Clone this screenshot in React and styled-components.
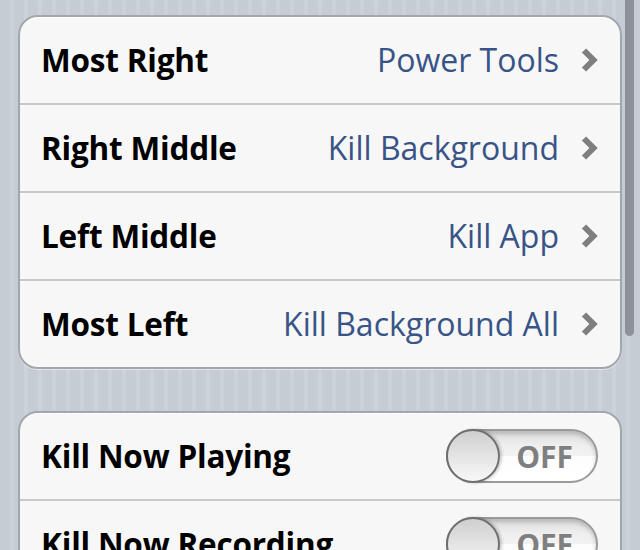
import React from "react"
import styled, { createGlobalStyle } from "styled-components"

const Global = createGlobalStyle`
  html, body {
    margin: 0;
    padding: 0;
  }
  body {
    width: 640px;
    height: 550px;
    overflow: hidden;
    background-color: #c5ccd4;
    background-image: repeating-linear-gradient(
      to right,
      #c5ccd4 0px,
      #c5ccd4 10px,
      #cbd2d9 10px,
      #cbd2d9 14px
    );
    font-family: "Open Sans", "Liberation Sans", sans-serif;
  }
`

const Page = styled.div`
  position: relative;
  padding: 15px 18px 0 18px;
  display: flex;
  flex-direction: column;
  gap: 42px;
`

const Group = styled.section`
  background: #f7f7f7;
  border: 2px solid #a2a7ad;
  border-radius: 20px;
  box-shadow: inset 0 1px 0 #ffffff, 0 1px 0 rgba(255, 255, 255, 0.5);
  overflow: hidden;
`

const Row = styled.div`
  height: 86px;
  display: flex;
  align-items: center;
  padding: 0 22px 0 21px;
  border-bottom: 2px solid #c9c9c9;

  &:last-child {
    border-bottom: none;
  }
`

const Label = styled.span`
  flex: 1;
  font-size: 31.5px;
  font-weight: 700;
  color: #000;
  letter-spacing: -0.2px;
  margin-top: -1px;
`

const Value = styled.span`
  font-size: 32px;
  font-weight: 400;
  color: #385487;
  margin-right: 22px;
  margin-top: -1px;
`

const Chevron = () => (
  <svg width="17" height="24" viewBox="0 0 17 24">
    <path d="M3 2.5 L12.5 12 L3 21.5" fill="none" stroke="#7f7f7f" strokeWidth="6" strokeLinejoin="miter" />
  </svg>
)

const Switch = styled.div`
  position: relative;
  width: 152px;
  height: 54px;
  box-sizing: border-box;
  border-radius: 27px;
  border: 2px solid #9a9a9a;
  background: linear-gradient(to bottom, #dcdcdc 0%, #efefef 30%, #f2f2f2 50%, #fdfdfd 51%, #ffffff 100%);
  box-shadow: inset 0 3px 4px rgba(0, 0, 0, 0.18);
  display: flex;
  align-items: center;
  justify-content: flex-end;
  padding-right: 23px;
`

const Knob = styled.div`
  position: absolute;
  left: -2px;
  top: -2px;
  width: 54px;
  height: 54px;
  box-sizing: border-box;
  border-radius: 50%;
  border: 2px solid #6f6f6f;
  background: linear-gradient(to bottom, #cfcfcf 0%, #e6e6e6 55%, #f8f8f8 100%);
  box-shadow: 2px 0 3px rgba(0, 0, 0, 0.2);
`

const SwitchText = styled.span`
  font-size: 30px;
  font-weight: 700;
  color: #7f7f7f;
  text-shadow: 0 1px 0 #fff;
`

const ScrollBar = styled.div`
  position: absolute;
  left: 625px;
  top: 0;
  width: 9px;
  height: 336px;
  border-radius: 0 0 5px 5px;
  background: #8d9298;
`

const Toggle = () => (
  <Switch>
    <Knob />
    <SwitchText>OFF</SwitchText>
  </Switch>
)

const links = [
  ["Most Right", "Power Tools"],
  ["Right Middle", "Kill Background"],
  ["Left Middle", "Kill App"],
  ["Most Left", "Kill Background All"],
]

const toggles = ["Kill Now Playing", "Kill Now Recording", "Kill Something"]

export default function App() {
  return (
    <>
      <Global />
      <Page>
        <Group>
          {links.map(([label, value]) => (
            <Row key={label}>
              <Label>{label}</Label>
              <Value>{value}</Value>
              <Chevron />
            </Row>
          ))}
        </Group>
        <Group>
          {toggles.map((label) => (
            <Row key={label}>
              <Label>{label}</Label>
              <Toggle />
            </Row>
          ))}
        </Group>
      </Page>
      <ScrollBar />
    </>
  )
}
